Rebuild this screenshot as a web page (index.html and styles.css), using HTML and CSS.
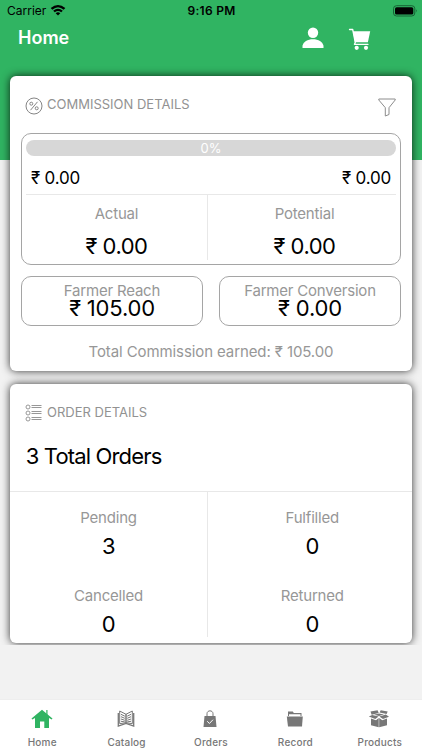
FILE: index.html
```html
<!DOCTYPE html>
<html lang="en">
<head>
<meta charset="utf-8">
<title>Home</title>
<link rel="stylesheet" href="styles.css">
</head>
<body>
<div class="app">
  <header class="top">
    <div class="status">
      <div class="carrier"><span>Carrier</span>
        <svg width="16" height="12" viewBox="0 0 16 12"><path d="M.7 4.1Q8-2.2 15.3 4.1L13.7 5.8Q8 .8 2.3 5.8Z"/><path d="M3.2 6.7Q8 2.6 12.8 6.7L11.2 8.3Q8 5.7 4.8 8.3Z"/><path d="M5.7 9.2Q8 7.2 10.3 9.2L8 11.6Z"/></svg>
      </div>
      <div class="clock">9:16 PM</div>
      <svg class="battery" width="25" height="12" viewBox="0 0 25 12"><rect x=".5" y=".7" width="21.3" height="10.3" rx="3" fill="none" stroke="#176335"/><rect x="2" y="2.2" width="18.3" height="7.3" rx="1.6"/><path d="M23 4.2q1.5 1.6 0 3.3z" fill="#176335"/></svg>
    </div>
    <div class="nav">
      <h1>Home</h1>
      <svg class="user" width="22" height="22" viewBox="0 0 22 22" fill="#fff"><circle cx="11" cy="5.7" r="5.2"/><path d="M.5 21v-2.2C1.3 14.7 5.6 12.2 11 12.2s9.700 2.500 10.500 6.600V21z"/></svg>
      <svg class="cart" width="23" height="22" viewBox="0 0 23 22"><path d="M5 3.300H22.200L19.900 14.200H6.900Z" fill="#fff"/><path d="M1.500 1.500H4.700L7.300 14.600L6.400 16.300H20" fill="none" stroke="#fff" stroke-width="1.300" stroke-linejoin="round" stroke-linecap="round"/><circle cx="8.700" cy="19.800" r="2.100" fill="#fff"/><circle cx="18" cy="19.800" r="2.100" fill="#fff"/></svg>
    </div>
  </header>
  <main class="content">
    <section class="card commission">
      <div class="card-head">
        <svg width="18" height="18" viewBox="0 0 18 18" fill="none" stroke="#858585" stroke-width="1"><circle cx="9" cy="9" r="8"/><path d="M12.500 4.800L5.500 13.200"/><circle cx="6.300" cy="6.700" r="1.500"/><circle cx="11.700" cy="11.300" r="1.500"/></svg>
        <h2>COMMISSION DETAILS</h2>
        <svg class="filter" width="18" height="19" viewBox="0 0 18 19" fill="none" stroke="#8c8c8c" stroke-width="1"><path d="M.8 1H17.200V2L11 9.700V16.500L7.300 18V9.700L.8 2Z"/></svg>
      </div>
      <div class="summary">
        <div class="progress"><span>0%</span></div>
        <div class="range"><span>₹ 0.00</span><span>₹ 0.00</span></div>
        <div class="split">
          <div class="cell"><span class="label">Actual</span><span class="value">₹ 0.00</span></div>
          <div class="cell"><span class="label">Potential</span><span class="value">₹ 0.00</span></div>
        </div>
      </div>
      <div class="farmers">
        <div class="farmer"><span class="label">Farmer Reach</span><span class="value">₹ 105.00</span></div>
        <div class="farmer"><span class="label">Farmer Conversion</span><span class="value">₹ 0.00</span></div>
      </div>
      <p class="total">Total Commission earned: ₹ 105.00</p>
    </section>
    <section class="card orders">
      <div class="card-head">
        <svg width="18" height="18" viewBox="0 0 18 18" fill="none" stroke="#8c8c8c" stroke-width=".9"><circle cx="3" cy="3" r="2"/><circle cx="3" cy="9" r="2"/><circle cx="3" cy="15" r="2"/><path d="M6.500 1.500H16.500M6.500 3.500H16.500M6.500 7.500H16.500M6.500 9.500H16.500M6.500 13.500H16.500M6.500 15.500H16.500"/></svg>
        <h2>ORDER DETAILS</h2>
      </div>
      <p class="order-total">3 Total Orders</p>
      <div class="order-grid">
        <div class="order-col">
          <div class="cell"><span class="label">Pending</span><span class="value">3</span></div>
          <div class="cell"><span class="label">Cancelled</span><span class="value">0</span></div>
        </div>
        <div class="order-col">
          <div class="cell"><span class="label">Fulfilled</span><span class="value">0</span></div>
          <div class="cell"><span class="label">Returned</span><span class="value">0</span></div>
        </div>
      </div>
    </section>
  </main>
  <nav class="tabs">
    <div class="tab active"><svg width="22" height="20" viewBox="0 0 22 20"><path d="M11 .7L21.500 9.500l-.8 1L18 8.900V19h-4.700v-6.500H9V19H4V8.900L1.300 10.500l-.8-1Z"/><path d="M15.300 1h1.200v6h-1.200z"/></svg><span>Home</span></div>
    <div class="tab"><svg width="22" height="20" viewBox="0 0 22 20" fill="none" stroke="#777" stroke-width="1"><path d="M4.700 2L11 5.300V13.700L4.700 14.700ZM17.300 2L11 5.300V13.700L17.300 14.700Z"/><path d="M3.300 4V17L11 14.500L18.700 17V4" stroke-width="1.300"/><path d="M6 5.300L9.800 7.200M6 7.700L9.800 9.300M6 10L9.800 11.300M6 12.300L9.800 12.900M16 5.300L12.200 7.200M16 7.700L12.200 9.300M16 10L12.200 11.300M16 12.300L12.200 12.900"/></svg><span>Catalog</span></div>
    <div class="tab"><svg width="22" height="20" viewBox="0 0 22 20"><path d="M5.500 7H16.500L17.500 18H4.500Z"/><path d="M8 8V4.700C8 .9 14 .9 14 4.700V8" fill="none" stroke="#777" stroke-width="1"/><path d="M8.200 12.200l2.200 2.300 3.600-3.800" fill="none" stroke="#fff" stroke-width="1"/></svg><span>Orders</span></div>
    <div class="tab"><svg width="22" height="20" viewBox="0 0 22 20"><path d="M4 7V2.500H8.800L9.800 4H17.500V7H16.500V5.300H5V7Z"/><path d="M2.800 7.500H18.800L18 17.500H4Z"/></svg><span>Record</span></div>
    <div class="tab"><svg width="22" height="20" viewBox="0 0 22 20"><path d="M2.500 2.600L9.600 1.200 10.700 3.900 3.600 5.700ZM11.600 3.500L12.700 1.200 19.700 2.600 18.600 5ZM.8 7.500L4.200 5.900 10.600 7.500 7.300 9.900ZM11.400 7.400L17.800 5.600 21 7.700 15 9.900Z"/><path d="M6 5.700L11 4.400 16 5.500 11 6.900Z"/><path d="M3 9.400L8 11.200 10.700 9V18.300L3 16.200ZM11.200 9L14.300 11.200 19 9.500V16.200L11.200 18.300Z"/></svg><span>Products</span></div>
  </nav>
</div>
</body>
</html>
```
FILE: styles.css
```css
* { box-sizing: border-box; }
body { margin: 0; font-family: Inter, "Liberation Sans", sans-serif; color: #000; background: #f2f2f2; }
h1, h2, p { margin: 0; font-weight: 400; }
svg { display: block; flex: none; }
.app { width: 422px; height: 750px; display: flex; flex-direction: column; overflow: hidden; background: linear-gradient(#30b462 160px, #f2f2f2 160px); }
.top { flex: none; height: 60px; }
.status { height: 22px; display: grid; grid-template-columns: 1fr auto 1fr; align-items: center; padding: 0 6px 0 7px; font-size: 12px; line-height: 22px; }
.carrier { display: flex; align-items: center; gap: 4px; }
.carrier svg { margin-top: -2px; }
.clock { font-weight: 600; letter-spacing: .3px; }
.battery { justify-self: end; margin: -1px -2px 0 0; }
.nav { display: flex; height: 32px; align-items: center; padding: 0 51px 0 18px; color: #fff; }
.nav h1 { flex: 1; font-size: 18px; font-weight: 600; line-height: 32px; }
.cart { margin-left: 24px; margin-top: 2px; }
.content { flex: none; height: 585px; padding: 15.500px 10.250px 0; overflow: hidden; }
.card { background: #fff; border-radius: 6px; box-shadow: 0 0 9px rgba(0, 0, 0, .8); }
.commission { height: 295.500px; padding: 17px 10.750px 0; }
.orders { height: 259px; margin-top: 13px; padding-top: 16.500px; }
.card-head { display: flex; height: 24px; align-items: center; padding-left: 4px; padding-right: 5px; }
.orders .card-head { padding-left: 14.750px; }
.card-head h2 { flex: 1; margin-left: 4px; font-size: 13px; line-height: 24px; color: #929292; margin-top: -1px; }
.card-head svg { margin-top: 2px; }
.card-head .filter { margin-top: 5px; }
.orders .card-head svg { margin-top: 0; }
.summary { height: 132px; margin-top: 16.500px; border: 1px solid #a5a5a5; border-radius: 10px; padding: 6px 4px 0; }
.progress { height: 16px; border-radius: 8px; background: #d7d7d7; color: #fff; text-align: center; font-size: 13px; line-height: 16px; }
.range { display: flex; justify-content: space-between; height: 38px; padding: 0 5px; font-size: 17px; line-height: 44px; letter-spacing: -.2px; }
.split { display: grid; grid-template-columns: 181px 1fr; height: 66px; border-top: 1px solid #e8e8e8; }
.split .cell + .cell, .order-col + .order-col { border-left: 1px solid #e8e8e8; padding-left: 5px; }
.cell, .farmer { display: flex; flex-direction: column; align-items: center; }
.label { font-size: 15px; line-height: 20px; color: #979797; letter-spacing: -.2px; }
.value { font-size: 22px; line-height: 28px; letter-spacing: -.5px; }
.split .cell { padding: 9px 0 0; }
.split .value { margin-top: 8px; }
.farmers { display: grid; grid-template-columns: 1fr 1fr; gap: 16px; margin-top: 11px; }
.farmer { height: 50px; border: 1px solid #a5a5a5; border-radius: 10px; padding-top: 6px; }
.farmer .label { line-height: 16px; }
.farmer .value { line-height: 18px; letter-spacing: -.2px; }
.total { margin-top: 16px; text-align: center; font-size: 15px; line-height: 20px; color: #979797; letter-spacing: -.1px; }
.order-total { margin: 16.500px 0 0 15.500px; font-size: 22px; line-height: 30px; letter-spacing: -.85px; }
.order-grid { display: grid; grid-template-columns: 196.500px 1fr; margin-top: 19.500px; border-top: 1px solid #e8e8e8; }
.order-col { height: 145px; padding-top: 16px; }
.order-col .cell { height: 78px; }
.order-col .value { margin-top: 4px; }
.tabs { flex: none; height: 51px; margin-top: 54px; display: grid; grid-template-columns: repeat(5, 1fr); background: #fff; border-top: 1px solid #eee; padding-top: 9px; }
.tab { display: flex; flex-direction: column; align-items: center; font-size: 10px; line-height: 14px; color: #777; fill: #777; font-weight: 500; letter-spacing: .2px; }
.tab span { margin-top: 6px; }
.tab svg { margin-right: 1px; }
.tab.active { fill: #30b462; }
.tab.active svg { margin-right: 0; }
```
